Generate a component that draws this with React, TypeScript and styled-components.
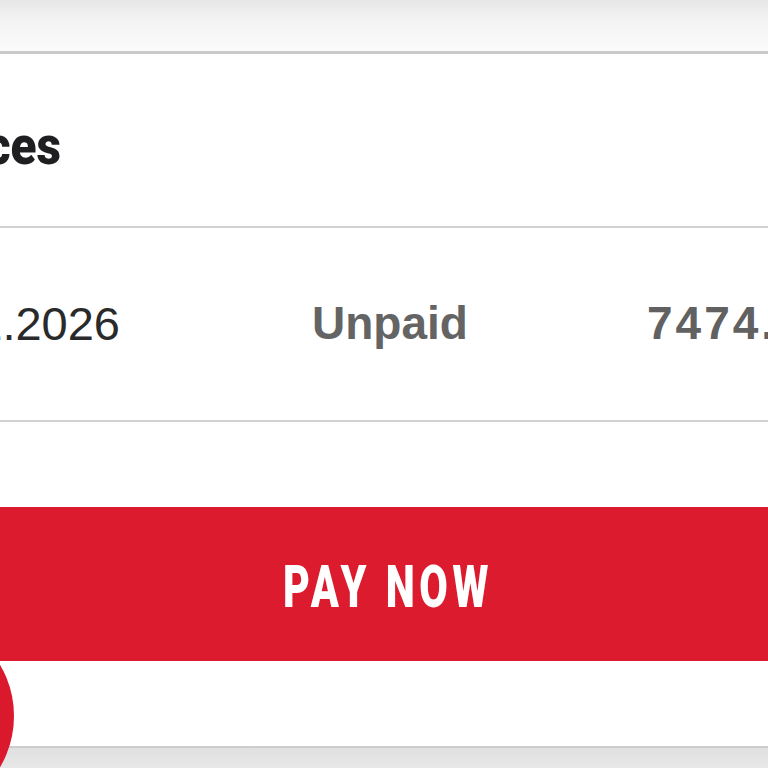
import React from "react";
import styled, { createGlobalStyle } from "styled-components";

const Global = createGlobalStyle`
  html, body {
    margin: 0;
    padding: 0;
    width: 768px;
    height: 768px;
    overflow: hidden;
    background: #ffffff;
  }
  #root { width: 768px; height: 768px; }
`;

const Screen = styled.div`
  position: relative;
  width: 768px;
  height: 768px;
  overflow: hidden;
  display: flex;
  flex-direction: column;
  background: #ffffff;
`;

const TopBar = styled.div`
  height: 51px;
  flex: none;
  background: linear-gradient(to bottom, #e7e7e7 0%, #f3f3f3 40%, #fbfbfb 100%);
  border-bottom: 3px solid #c9c9c9;
`;

const HeadingSection = styled.section`
  flex: none;
  height: 172px;
  display: flex;
  align-items: flex-start;
  border-bottom: 2px solid #d2d2d2;
`;

const TitleBox = styled.div`
  width: 61px;
  flex: none;
  display: flex;
  justify-content: flex-end;
  margin-top: 66px;
`;

const Title = styled.h2`
  margin: 0;
  white-space: nowrap;
  font-family: Roboto, "Liberation Sans", sans-serif;
  font-weight: 900;
  font-size: 53px;
  line-height: 53px;
  color: #1f1f22;
  transform: scaleX(0.9);
  transform-origin: right center;
`;

const InvoiceRow = styled.div`
  flex: none;
  height: 194px;
  display: flex;
  align-items: center;
  padding-bottom: 2px;
  box-sizing: border-box;
  border-bottom: 2px solid #d2d2d2;
  font-family: "Liberation Sans", Arial, sans-serif;
  font-size: 47px;
  line-height: 47px;
`;

const Cell = styled.div<{
  $width?: number;
  $gap?: number;
  $bold?: boolean;
  $end?: boolean;
  $spacing?: number;
  $color: string;
}>`
  flex: none;
  display: flex;
  justify-content: ${(p) => (p.$end ? "flex-end" : "flex-start")};
  width: ${(p) => (p.$width ? `${p.$width}px` : "auto")};
  margin-left: ${(p) => p.$gap ?? 0}px;
  white-space: nowrap;
  font-weight: ${(p) => (p.$bold ? 700 : 400)};
  font-size: ${(p) => (p.$bold ? "46px" : "47px")};
  letter-spacing: ${(p) => p.$spacing ?? 0}px;
  color: ${(p) => p.$color};
`;

const Spacer = styled.div<{ $h: number }>`
  flex: none;
  height: ${(p) => p.$h}px;
`;

const PayButton = styled.button`
  position: relative;
  z-index: 2;
  flex: none;
  height: 154px;
  width: 100%;
  margin: 0;
  border: none;
  padding: 4px 0 0 8px;
  background: #dc1c2e;
  display: flex;
  align-items: center;
  justify-content: center;
  cursor: pointer;
`;

const PayLabel = styled.span`
  display: inline-block;
  white-space: nowrap;
  font-family: Roboto, "Liberation Sans", sans-serif;
  font-weight: 900;
  font-size: 59px;
  line-height: 59px;
  letter-spacing: 6.5px;
  color: #ffffff;
  transform: scaleX(0.7);
  transform-origin: center center;
`;

const Footer = styled.div`
  flex: 1;
  display: flex;
  flex-direction: column;
`;

const FooterWhite = styled.div`
  height: 85px;
  flex: none;
  background: #ffffff;
`;

const BottomBar = styled.div`
  flex: 1;
  border-top: 2px solid #cdcdcd;
  background: linear-gradient(to bottom, #e0e0e0 0%, #e8e8e8 100%);
`;

const ChatBubble = styled.div`
  position: absolute;
  z-index: 1;
  left: -188px;
  top: 615px;
  width: 202px;
  height: 202px;
  border-radius: 50%;
  background: #da1a2c;
`;

export default function App() {
  return (
    <>
      <Global />
      <Screen>
        <TopBar />
        <HeadingSection>
          <TitleBox>
            <Title>Invoices</Title>
          </TitleBox>
        </HeadingSection>
        <InvoiceRow>
          <Cell $width={120} $end $color="#2a2a2a">15.01.2026</Cell>
          <Cell $width={335} $gap={192} $bold $color="#646464">Unpaid</Cell>
          <Cell $bold $spacing={3} $color="#616161">7474.00</Cell>
        </InvoiceRow>
        <Spacer $h={85} />
        <PayButton type="button">
          <PayLabel>PAY NOW</PayLabel>
        </PayButton>
        <Footer>
          <FooterWhite />
          <BottomBar />
        </Footer>
        <ChatBubble />
      </Screen>
    </>
  );
}
